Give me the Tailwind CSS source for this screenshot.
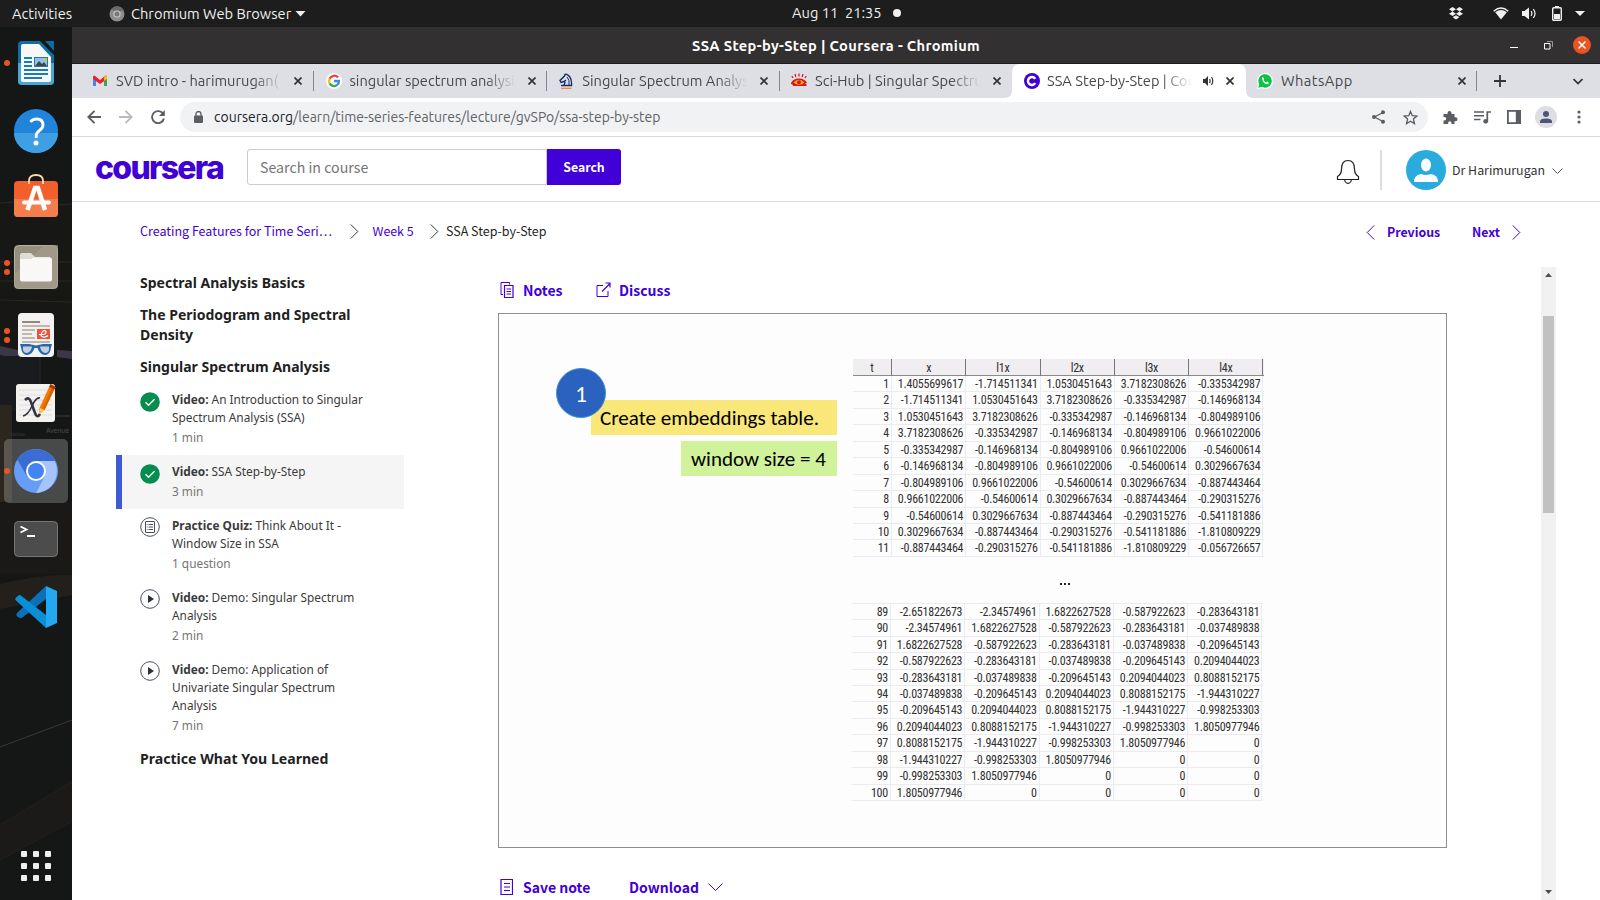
<!DOCTYPE html>
<html lang="en">
<head>
<meta charset="utf-8">
<title>SSA Step-by-Step | Coursera</title>
<script src="https://cdn.jsdelivr.net/npm/@tailwindcss/browser@4"></script>
</head>
<body class="w-[1600px] h-[900px] overflow-hidden bg-white font-['Ubuntu','Noto_Sans',sans-serif]">

<!-- GNOME top bar -->
<div class="h-[27px] bg-[#1d1d1d] text-[#f0f0f0] text-[14.67px] flex items-center relative whitespace-pre">
  <span class="ml-3 w-[97px]">Activities</span>
  <svg class="w-4 h-4" viewBox="0 0 16 16"><circle cx="8" cy="8" r="7.5" fill="#8d8d8d"/><path d="M1.5 4A7.5 7.5 0 0 1 15 5H8z" fill="#6a6a6a"/><circle cx="8" cy="8" r="3.6" fill="#c9c9c9"/><circle cx="8" cy="8" r="2.5" fill="#777"/></svg>
  <span class="ml-[6px]">Chromium Web Browser</span>
  <svg class="ml-[4px] w-[11px] h-[6px]" viewBox="0 0 11 6"><path d="M.5 0h10L5.500 5.500z" fill="#f0f0f0"/></svg>
  <div class="absolute left-[792px] top-0 h-[26px] flex items-center gap-[11px]"><span>Aug 11  21:35</span><span class="w-2 h-2 rounded-full bg-[#f0f0f0]"></span></div>
  <div class="ml-auto flex items-center mr-[15px]">
    <svg class="w-[14px] h-[13px] mr-[30px]" viewBox="0 0 14 13" fill="#f0f0f0"><path d="M3.500 0L7 2.200 3.500 4.400 0 2.200zM10.500 0L14 2.200 10.500 4.400 7 2.200zM3.500 4.600L7 6.800 3.500 9 0 6.800zM10.500 4.600L14 6.800 10.500 9 7 6.800zM7 8.200l3.400 2.100L7 12.500 3.600 10.300z"/></svg>
    <svg class="w-[16px] h-[13px] mr-[13px]" viewBox="0 0 16 13"><path d="M.7 4.200Q8-2.200 15.300 4.200" fill="none" stroke="#f0f0f0" stroke-width="1.400"/><path d="M2.200 5.200Q8 1 13.800 5.200L8 12.500z" fill="#f0f0f0"/></svg>
    <svg class="w-[15px] h-[13px] mr-[15px]" viewBox="0 0 15 13"><path d="M0 4h2.500L7 .5v12L2.500 9H0z" fill="#f0f0f0"/><path d="M9 4.200q1.800 2.300 0 4.600M11.300 2.200q3.500 4.300 0 8.600" fill="none" stroke="#f0f0f0" stroke-width="1.200"/></svg>
    <svg class="w-[10px] h-[15px] mr-[13px]" viewBox="0 0 10 15"><path d="M3 0h4v1.500H3z" fill="#f0f0f0"/><rect x=".7" y="1.700" width="8.600" height="12.600" rx="1" fill="none" stroke="#f0f0f0" stroke-width="1.400"/><path d="M2 8h6v5H2z" fill="#f0f0f0"/></svg>
    <svg class="w-[10px] h-[6px]" viewBox="0 0 10 6"><path d="M0 0h10L5 5z" fill="#f0f0f0"/></svg>
  </div>
</div>

<div class="flex h-[873px]">
  <!-- Dock -->
  <div class="w-[72px] h-full bg-[#151515] relative flex flex-col pt-[2px] shrink-0">
    <svg class="absolute inset-0 w-[72px] h-[873px]" viewBox="0 27 72 873">
      <rect y="27" width="72" height="873" fill="#151616"/>
      <rect y="200" width="72" height="160" fill="#171715"/>
      <path d="M0 203l14-1M58 205l14-1M0 262h72M0 281h72M0 300l72 2" stroke="#2a2822" stroke-width="1"/>
      <path d="M0 346l18 4v9l-18-4zM57 350l15 1v8l-15-2z" fill="#3b3648"/>
      <path d="M0 356h40v55H0z" fill="#1a1b1e"/><path d="M40 350v62" stroke="#2b2b28"/>
      <path d="M0 405h12v97H0z" fill="#2b271f"/><path d="M46 416h24" stroke="#3a3a38"/>
      <path d="M0 584Q40 574 72 575v20L0 609z" fill="#23201c"/>
      <path d="M0 502h72v72H0z" fill="#1a1917"/>
      <path d="M0 747L72 720" stroke="#3b3833"/>
      <path d="M0 825L72 780v40L0 860z" fill="#1b1a18"/><path d="M0 825L72 782M0 860L72 821" stroke="#24221f"/>
      <text x="46" y="433" font-size="6.800" font-family="Liberation Sans" fill="#4a4a4a">Avenue</text>
      <text x="10" y="436" font-size="5.500" font-family="Liberation Sans" fill="#3a3936">venue</text>
    </svg>
    <div class="relative h-[68px] flex items-center justify-center">
      <i class="absolute left-1 w-[6px] h-[6px] rounded-full bg-[#e95420]"></i>
      <svg class="w-9 h-11" viewBox="0 0 36 44"><path d="M4 0h18l14 14v26a4 4 0 0 1-4 4H4a4 4 0 0 1-4-4V4a4 4 0 0 1 4-4z" fill="#0f6fa3"/><path d="M0 22h36v18a4 4 0 0 1-4 4H4a4 4 0 0 1-4-4z" fill="#4aa6d3"/><path d="M27 0h9v10z" fill="#0e6ca0"/><path d="M5 3h16l12 13v23a2 2 0 0 1-2 2H5a2 2 0 0 1-2-2V5a2 2 0 0 1 2-2z" fill="#f7f7f7"/><path d="M6 17h8M6 21h8M6 25h8M6 29h24M6 33h24M6 37h18" stroke="#1b7bb5" stroke-width="2"/><path d="M16 16h14v10H16z" fill="#1b7bb5"/><path d="M17 17h12v8H17z" fill="#8fc4e6"/><path d="M17 25l4-5 3 3 2-2 3 4z" fill="#444"/><circle cx="27.500" cy="18.500" r="1.500" fill="#f0c020"/></svg>
    </div>
    <div class="relative h-[68px] flex items-center justify-center">
      <svg class="w-11 h-11" viewBox="0 0 44 44"><circle cx="22" cy="22" r="22" fill="#1f84da"/><path d="M0 24h44a22 20 0 0 1-44 0z" fill="#3f9fe5"/><path d="M16.500 13q2-3 6-3 6.500 0 6.500 6 0 3-3.500 5.500T22.200 27v2" fill="none" stroke="#fff" stroke-width="2.800"/><circle cx="22" cy="34" r="2.500" fill="#fff"/></svg>
    </div>
    <div class="relative h-[68px] flex items-center justify-center">
      <svg class="w-11 h-11 mb-2" viewBox="0 0 44 44"><rect y="8" width="44" height="36" rx="4" fill="#f1602c"/><path d="M0 26h44v14a4 4 0 0 1-4 4H4a4 4 0 0 1-4-4z" fill="#f47d4e"/><path d="M15 11V8q0-6 7-6t7 6v3" fill="none" stroke="#f9dcae" stroke-width="1.800"/><path d="M13.500 37L21 15h3l7 22" fill="none" stroke="#fff" stroke-width="4.500"/><path d="M10 29.500h25" stroke="#fff" stroke-width="4" stroke-linecap="round"/></svg>
    </div>
    <div class="relative h-[68px] flex items-center justify-center">
      <i class="absolute left-1 top-[27px] w-[6px] h-[6px] rounded-full bg-[#e95420]"></i><i class="absolute left-1 top-[36px] w-[6px] h-[6px] rounded-full bg-[#e95420]"></i>
      <svg class="w-11 h-11" viewBox="0 0 44 44"><rect x=".5" y=".5" width="43" height="43" rx="4" fill="#968e7e" stroke="#b7b0a4"/><path d="M0 30L30 0h14v40a4 4 0 0 1-4 4H4a4 4 0 0 1-4-4z" fill="#a8a08f" opacity=".6"/><path d="M6 10q0-2 2-2h9l4 4h15v10H6z" fill="#dfdcd3"/><rect x="6" y="12.500" width="32" height="24" rx="2" fill="#f9f8f7"/><path d="M6 14h11l3-2.500H6z" fill="#dfdcd3"/></svg>
    </div>
    <div class="relative h-[68px] flex items-center justify-center">
      <i class="absolute left-1 top-[27px] w-[6px] h-[6px] rounded-full bg-[#e95420]"></i><i class="absolute left-1 top-[36px] w-[6px] h-[6px] rounded-full bg-[#e95420]"></i>
      <svg class="w-9 h-11" viewBox="0 0 36 44"><rect width="36" height="44" rx="4" fill="#f3f2f0"/><path d="M4 9h18" stroke="#8e8a80" stroke-width="2"/><path d="M4 13h28M4 17h13M4 21h10M4 25h13M4 29h28" stroke="#bdb9ae" stroke-width="1.800"/><rect x="19" y="16" width="13" height="10" fill="#ee5340"/><path d="M21 21.500q7 .5 7-2t-3-1.500q-4 5 0 6 3 .5 5-1.500" fill="none" stroke="#fff" stroke-width="1.200"/><path d="M2 31h9l7 1.500 7-1.500h9l-1 3.500q-1 7.500-6 7.500t-7.500-7h-3q-2.500 7-7.500 7t-6-7.500z" fill="#2566ae"/><path d="M5 33.500h9q-1 6.500-5.500 6.500T5 33.500zM22 33.500h9q1 6.500-3.500 6.500T22 33.500z" fill="#c3cddb"/></svg>
    </div>
    <div class="relative h-[68px] flex items-center justify-center">
      <svg class="w-[42px] h-[42px]" viewBox="0 0 42 42"><rect x="1" y="2" width="39" height="38" rx="3" fill="#f4f2ef"/><path d="M4 8h33M4 13h33M4 18h33M4 23h33M4 28h33M4 33h33" stroke="#dcdce2"/><path d="M10 18q4-4 6 2l4 11q2 6 5 1" fill="none" stroke="#33323e" stroke-width="2.600"/><path d="M25 16q-4-1-8 8t-9 10" fill="none" stroke="#33323e" stroke-width="1.600"/><path d="M35.500 2l5 3-11 23-5 4v-6z" fill="#f57900"/><path d="M38 3.500l2.500 1.500-11 23-2-1z" fill="#d86400"/><path d="M25 26l4.500 2-5 4z" fill="#f4c94a"/><path d="M35.500 2l5 3-1.300 2.500-5-2.500z" fill="#a8370e"/></svg>
    </div>
    <div class="relative h-[68px] flex items-center justify-center">
      <div class="absolute left-1 top-[2px] w-16 h-16 rounded-[5px] bg-white/22"></div>
      <i class="absolute left-1 w-[6px] h-[6px] rounded-full bg-[#e95420]"></i>
      <svg class="relative w-11 h-11" viewBox="0 0 44 44"><circle cx="22" cy="22" r="22" fill="#669df6"/><path d="M22 22L2.900 11A22 22 0 0 1 41 11.500z" fill="#3b6cd4"/><path d="M3.800 10A22 22 0 0 1 40.500 12H22z" fill="#3b6cd4"/><path d="M22 12h18.500A22 22 0 0 1 22 44l9-17z" fill="#a5c4fb"/><path d="M3.300 10.500L13 27.500 22 22z" fill="#3b6cd4"/><circle cx="22" cy="22" r="10" fill="#fff"/><circle cx="22" cy="22" r="8" fill="#4384f4"/></svg>
    </div>
    <div class="relative h-[68px] flex items-center justify-center">
      <svg class="w-11 h-9" viewBox="0 0 44 36"><rect x=".5" y=".5" width="43" height="35" rx="4" fill="#4c4c4c" stroke="#777"/><path d="M6.500 5.500l6 3-6 3M13 15h8" fill="none" stroke="#fff" stroke-width="1.800"/></svg>
    </div>
    <div class="relative h-[68px] flex items-center justify-center">
      <svg class="w-[42px] h-[42px]" viewBox="0 0 42 42"><path d="M31 0L3.500 25.500Q-.5 29 3 31l2 1q1 .5 3-1L31 13z" fill="#0a71b8"/><path d="M31 42L1 14.500q-1.500-1.500 0-3l2.500-2q1.500-1 3 .5L31 29z" fill="#0b8ed8"/><path d="M31 0l11 5v32l-11 5z" fill="#24a8f2"/></svg>
    </div>
    <div class="absolute left-[21px] top-[824px] grid grid-cols-3 gap-[6px]">
      <i class="w-[6px] h-[6px] rounded-[1px] bg-[#eee]"></i><i class="w-[6px] h-[6px] rounded-[1px] bg-[#eee]"></i><i class="w-[6px] h-[6px] rounded-[1px] bg-[#eee]"></i>
      <i class="w-[6px] h-[6px] rounded-[1px] bg-[#eee]"></i><i class="w-[6px] h-[6px] rounded-[1px] bg-[#eee]"></i><i class="w-[6px] h-[6px] rounded-[1px] bg-[#eee]"></i>
      <i class="w-[6px] h-[6px] rounded-[1px] bg-[#eee]"></i><i class="w-[6px] h-[6px] rounded-[1px] bg-[#eee]"></i><i class="w-[6px] h-[6px] rounded-[1px] bg-[#eee]"></i>
    </div>
  </div>

  <!-- Browser window -->
  <div class="flex-1 min-w-0 h-full flex flex-col">
    <div class="h-[37px] bg-[#323031] border-b border-[#1c1a1b] flex items-center relative text-white shrink-0">
      <span class="ml-[620px] mt-[2px] font-bold text-[14.67px] tracking-[0.330px] whitespace-nowrap">SSA Step-by-Step | Coursera - Chromium</span>
      <div class="ml-auto mr-[9px] flex items-center">
        <svg class="w-[8px] h-[10px] mr-[26px]" viewBox="0 0 8 10"><path d="M0 7.500h8" stroke="#fff"/></svg>
        <svg class="w-[9px] h-[9px] mr-[20px]" viewBox="0 0 9 9"><path d="M.5 2.500h5.500v5.500H.5z" fill="none" stroke="#fff"/><path d="M3 .5h5.500V6" fill="none" stroke="#999"/></svg>
        <svg class="w-[18px] h-[18px]" viewBox="0 0 18 18"><circle cx="9" cy="9" r="9" fill="#e95420"/><path d="M5.500 5.500l7 7m0-7l-7 7" stroke="#fff" stroke-width="1.500"/></svg>
      </div>
    </div>

    <!-- Tab strip -->
    <div class="h-[34px] bg-[#dedfe5] flex pl-[8px] text-[14.67px] text-[#45474a] shrink-0 relative">
      <div class="w-[233.5px] flex items-center pl-3 relative">
        <svg class="w-4 h-4" viewBox="0 0 16 16"><path d="M1 4v9h3V7z" fill="#4285f4"/><path d="M12 7v6h3V4z" fill="#34a853"/><path d="M1 4q0-1.500 1.500-1.500L8 7l5.500-4.500Q15 2.500 15 4v2l-7 5-7-5z" fill="#ea2033"/><path d="M12 3.700q3-2.500 3 .3v2l-3 2z" fill="#fbbc04"/></svg>
        <span class="ml-2 w-[171px] overflow-hidden whitespace-nowrap [mask-image:linear-gradient(to_right,#000_80%,transparent_98%)]">SVD intro - harimurugan(</span>
        <svg class="ml-[7px] w-2 h-2" viewBox="0 0 8 8"><path d="M.5.500l7 7m0-7l-7 7" stroke="#333" stroke-width="1.700"/></svg>
        <i class="absolute right-0 top-[7px] w-px h-5 bg-[#85878d]"></i>
      </div>
      <div class="w-[233.300px] flex items-center pl-3 relative">
        <svg class="w-4 h-4" viewBox="0 0 16 16"><circle cx="8" cy="8" r="8" fill="#fff"/><g fill="none" stroke-width="2.300"><path d="M12 4.500A5 5 0 0 0 3.600 5.700" stroke="#ea4335"/><path d="M3.600 5.700a5 5 0 0 0 0 4.700" stroke="#fbbc05"/><path d="M3.600 10.400a5 5 0 0 0 7.600 1.500" stroke="#34a853"/><path d="M11.200 11.900Q13 10.400 12.900 8H8" stroke="#4285f4"/></g></svg>
        <span class="ml-2 w-[169px] overflow-hidden whitespace-nowrap [mask-image:linear-gradient(to_right,#000_80%,transparent_98%)]">singular spectrum analysi</span>
        <svg class="ml-[9px] w-2 h-2" viewBox="0 0 8 8"><path d="M.5.500l7 7m0-7l-7 7" stroke="#333" stroke-width="1.700"/></svg>
        <i class="absolute right-0 top-[7px] w-px h-5 bg-[#85878d]"></i>
      </div>
      <div class="w-[233.200px] flex items-center pl-[11.500px] relative">
        <svg class="w-4 h-4" viewBox="0 0 16 16"><path d="M3 12.500h10.500q.5-6-2-9T7 1.500L6.500 3 2 7.500l1 2 3-1 2-1.500M6 8.500q2 1-.5 4" fill="none" stroke="#1b2a6b" stroke-width="1.400"/><path d="M9 4q3 3 2 8" fill="none" stroke="#1b2a6b"/><path d="M3 15.300h10.500" stroke="#f5821f" stroke-width="1.200"/></svg>
        <span class="ml-2 w-[169px] overflow-hidden whitespace-nowrap [mask-image:linear-gradient(to_right,#000_80%,transparent_98%)]">Singular Spectrum Analys</span>
        <svg class="ml-[9px] w-2 h-2" viewBox="0 0 8 8"><path d="M.5.500l7 7m0-7l-7 7" stroke="#333" stroke-width="1.700"/></svg>
        <i class="absolute right-0 top-[7px] w-px h-5 bg-[#85878d]"></i>
      </div>
      <div class="w-[232px] flex items-center pl-3 relative">
        <svg class="-ml-px w-4 h-4" viewBox="0 0 16 16"><path d="M2 5L.8 3M4.800 4L4 1M8 3.500V.5M11.200 4L12 1M14 5l1.200-2" stroke="#d8141c" stroke-width="1.200"/><path d="M0 10q2-4.500 8-4.500t8 4.500l-2 .5 2 1.500-1 1H1.500q2-1-1.500-2z" fill="#d8141c"/><path d="M2.500 9.500Q5 6.800 8 6.800t5.500 2.700Q11 11.800 8 11.800t-5.500-2.300z" fill="#f7b500"/><circle cx="8" cy="9.200" r="2" fill="#d8141c"/></svg>
        <span class="ml-2 w-[169px] overflow-hidden whitespace-nowrap [mask-image:linear-gradient(to_right,#000_80%,transparent_98%)]">Sci-Hub | Singular Spectru</span>
        <svg class="ml-[9px] w-2 h-2" viewBox="0 0 8 8"><path d="M.5.500l7 7m0-7l-7 7" stroke="#333" stroke-width="1.700"/></svg>
      </div>
      <div class="w-[234px] flex items-center pl-3 relative bg-white rounded-t-[8px]">
        <svg class="absolute -left-2 bottom-0 w-2 h-2" viewBox="0 0 8 8"><path d="M8 0v8H0q8 0 8-8z" fill="#fff"/></svg>
        <svg class="absolute -right-2 bottom-0 w-2 h-2" viewBox="0 0 8 8"><path d="M0 0v8h8Q0 8 0 0z" fill="#fff"/></svg>
        <svg class="w-4 h-4" viewBox="0 0 16 16"><circle cx="8" cy="8" r="8" fill="#4000d6"/><path d="M11.300 5.800A4 4 0 1 0 11.300 10.200" fill="none" stroke="#fff" stroke-width="2.400"/></svg>
        <span class="-ml-px pl-2 w-[157px] overflow-hidden whitespace-nowrap [mask-image:linear-gradient(to_right,#000_78%,transparent_98%)]">SSA Step-by-Step | Cou</span>
        <svg class="ml-[7px] w-[11px] h-[10px]" viewBox="0 0 11 10"><path d="M0 3h2l3-3v10L2 7H0z" fill="#333"/><path d="M6.500 3q1.300 2 0 4M8.500 1q2.500 4 0 8" fill="none" stroke="#333" stroke-width="1.200"/></svg>
        <svg class="ml-[12px] w-2 h-2" viewBox="0 0 8 8"><path d="M.5.500l7 7m0-7l-7 7" stroke="#333" stroke-width="1.700"/></svg>
      </div>
      <div class="w-[231.500px] flex items-center pl-[11px] relative">
        <svg class="w-4 h-4" viewBox="0 0 16 16"><path d="M0 16l1-4.500A8 8 0 1 1 4.500 15z" fill="#fff"/><path d="M1.300 14.700l.9-3.500A6.700 6.700 0 1 1 4.800 13.800z" fill="#0cc143"/><path d="M5 5q1-1.600 1.700 0l.4 1-.6.900q.9 1.800 2.600 2.500l.9-1q1.500.4 1.800 1-.2 2-2.200 1.900Q5.500 10.500 5 5z" fill="#fff"/></svg>
        <span class="ml-2 w-[171px] tracking-[0.450px]">WhatsApp</span>
        <svg class="ml-[6px] w-2 h-2" viewBox="0 0 8 8"><path d="M.5.500l7 7m0-7l-7 7" stroke="#333" stroke-width="1.700"/></svg>
        <i class="absolute right-0 top-[7px] w-px h-5 bg-[#85878d]"></i>
      </div>
      <div class="flex-1 flex items-center justify-between pl-[17px] pr-[17px]">
        <svg class="w-3 h-3" viewBox="0 0 12 12"><path d="M6 0v12M0 6h12" stroke="#333" stroke-width="1.800"/></svg>
        <svg class="w-[10px] h-[7px]" viewBox="0 0 10 7"><path d="M.5 1L5 5.500 9.500 1" fill="none" stroke="#333" stroke-width="1.700"/></svg>
      </div>
    </div>

    <!-- Toolbar -->
    <div class="h-[39px] bg-white border-b border-[#d9d9dc] flex items-center shrink-0 pl-[15px] text-[#5f6368]">
      <svg class="w-[14px] h-[14px]" viewBox="0 0 14 14"><path d="M14 7H1.500M7.500.8L1.300 7l6.200 6.200" fill="none" stroke="#5a5d62" stroke-width="1.900"/></svg>
      <svg class="ml-[18px] w-[14px] h-[14px]" viewBox="0 0 14 14"><path d="M0 7h12.500M6.500.8L12.700 7l-6.200 6.200" fill="none" stroke="#b9bbbe" stroke-width="1.900"/></svg>
      <svg class="ml-[18px] w-[14px] h-[14px]" viewBox="0 0 14 14"><path d="M12.300 4.200A6 6 0 1 0 12.900 8.500" fill="none" stroke="#5a5d62" stroke-width="1.900"/><path d="M13.800 0v6H8z" fill="#5a5d62"/></svg>
      <div class="ml-[15px] w-[1248px] h-[30px] rounded-full bg-[#f1f2f4] flex items-center pl-[13.500px] text-[13.990px]">
        <svg class="w-[9px] h-[12px]" viewBox="0 0 9 12"><rect y="4.500" width="9" height="7.500" rx="1" fill="#5a5d62"/><path d="M2 5V3a2.500 2.500 0 0 1 5 0v2" fill="none" stroke="#5a5d62" stroke-width="1.300"/></svg>
        <span class="ml-[11.500px] w-[447px] whitespace-nowrap"><span class="text-[#202124]">coursera.org</span>/learn/time-series-features/lecture/gvSPo/ssa-step-by-step</span>
        <svg class="ml-auto mr-[18px] w-[13px] h-[14px]" viewBox="0 0 13 14"><path d="M11 2.500L2.500 7l8.500 4.500" fill="none" stroke="#5a5d62" stroke-width="1.300"/><g fill="#5a5d62"><circle cx="11" cy="2.300" r="2"/><circle cx="2" cy="7" r="2"/><circle cx="11" cy="11.700" r="2"/></g></svg>
        <svg class="mr-[10.500px] w-[15px] h-[15px]" viewBox="0 0 16 16"><path d="M8 1.500l1.900 4.600 4.900.4-3.700 3.200 1.100 4.800L8 12l-4.200 2.500 1.100-4.800L1.200 6.500l4.900-.4z" fill="none" stroke="#5a5d62" stroke-width="1.400"/></svg>
      </div>
      <svg class="ml-[15px] w-[15px] h-[15px]" viewBox="0 0 15 15"><path d="M1.500 4H4.500V3a2 2 0 0 1 4 0v1h3v3.200h1a2 2 0 0 1 0 4h-1V14H8.500v-1a1.700 1.700 0 0 0-3.400 0v1H.5v-3.500h1a1.700 1.700 0 0 0 0-3.400H.5V4z" fill="#5a5d62"/></svg>
      <svg class="ml-[15.500px] w-[17px] h-[13px]" viewBox="0 0 17 13"><path d="M0 1h10M0 4.700h10M0 8.400h6.500" stroke="#5a5d62" stroke-width="1.500"/><path d="M13.300 10V1H17" fill="none" stroke="#5a5d62" stroke-width="1.700"/><circle cx="11.700" cy="10.300" r="2.400" fill="#5a5d62"/></svg>
      <svg class="ml-[16.500px] w-[14px] h-[14px]" viewBox="0 0 14 14"><path d="M.9.900h12.200v12.200H.9z" fill="none" stroke="#5a5d62" stroke-width="1.800"/><path d="M8.800 1H13v12H8.800z" fill="#5a5d62"/></svg>
      <svg class="ml-[14px] w-[22px] h-[22px]" viewBox="0 0 22 22"><circle cx="11" cy="11" r="11" fill="#dcdee4"/><circle cx="11" cy="8" r="3" fill="#4c5677"/><path d="M5 17v-1.500q0-3 6-3t6 3V17z" fill="#4c5677"/></svg>
      <svg class="ml-[19.500px] w-[4px] h-[14px]" viewBox="0 0 4 14" fill="#5a5d62"><circle cx="2" cy="2" r="1.600"/><circle cx="2" cy="7" r="1.600"/><circle cx="2" cy="12" r="1.600"/></svg>
    </div>

    <!-- Course header -->
    <div class="h-[65px] border-b border-[#dcdcdc] flex items-center shrink-0 bg-white font-['Noto_Sans_CJK_SC','Open_Sans',sans-serif]">
      <span class="ml-[23px] w-[152px] font-['Inter',sans-serif] font-extrabold text-[32px] leading-none tracking-[-1.730px] text-[#4000d6] mb-[3px]">coursera</span>
      <div class="w-[300px] h-[36px] mb-[5px] rounded-l-[3px] border border-[#c9cad6] flex items-center pl-3 text-[14.2px] leading-5 text-[#757575]">Search in course</div>
      <div class="w-[74px] h-[36px] mb-[5px] rounded-r-[3px] bg-[#4000d6] text-white font-bold text-[12.300px] leading-5 flex items-center justify-center">Search</div>
      <svg class="ml-auto mt-[6px] w-[24px] h-[26px]" viewBox="0 0 24 26"><path d="M1.500 20.500v-3q4-2 4-7.500 0-8.500 6.500-8.500T18.500 10q0 5.500 4 7.500v3z" fill="none" stroke="#1f1f1f" stroke-width="1.200"/><path d="M8.700 20.500a3.300 3.800 0 0 0 6.600 0" fill="none" stroke="#1f1f1f" stroke-width="1.200"/></svg>
      <div class="ml-[20px] mt-px w-[2px] h-10 bg-[#dedede]"></div>
      <svg class="ml-[24px] mt-px w-10 h-10" viewBox="0 0 40 40"><circle cx="20" cy="20" r="20" fill="#2aabdd"/><ellipse cx="20" cy="15" rx="5" ry="6.500" fill="#fff"/><path d="M8 32q0-7 7-8 5 2 10 0 7 1 7 8z" fill="#fff"/></svg>
      <span class="ml-[6px] mt-[2px] w-[100px] text-[12.400px] leading-5 text-[#333] whitespace-nowrap">Dr Harimurugan</span>
      <svg class="mt-[3px] mr-[37px] w-[11px] h-[6px]" viewBox="0 0 11 6"><path d="M.5.500l5 5 5-5" fill="none" stroke="#555"/></svg>
    </div>

    <!-- Breadcrumbs -->
    <div class="h-[58px] shrink-0 flex items-center pl-[68px] font-['Noto_Sans_CJK_SC','Open_Sans',sans-serif] text-[12.500px] leading-5 text-[#4000d6] whitespace-nowrap">
      <span class="w-[209.500px]">Creating Features for Time Seri…</span>
      <svg class="w-[9px] h-[15px]" viewBox="0 0 9 15"><path d="M.8.500l7 7-7 7" fill="none" stroke="#333"/></svg>
      <span class="ml-[14px] w-[57.500px] text-[12.400px]">Week 5</span>
      <svg class="w-[9px] h-[15px]" viewBox="0 0 9 15"><path d="M.8.500l7 7-7 7" fill="none" stroke="#333"/></svg>
      <span class="ml-[7px] text-[#1f1f1f]">SSA Step-by-Step</span>
      <div class="ml-auto mt-[2px] mr-[79px] flex items-center font-bold text-[12.350px]">
        <svg class="w-[9px] h-[15px]" viewBox="0 0 9 15"><path d="M8.200.500l-7 7 7 7" fill="none" stroke="#4000d6"/></svg>
        <span class="ml-[12px] w-[85px]">Previous</span>
        <span class="w-[40px]">Next</span>
        <svg class="w-[9px] h-[15px]" viewBox="0 0 9 15"><path d="M.8.500l7 7-7 7" fill="none" stroke="#4000d6"/></svg>
      </div>
    </div>

    <div class="flex-1 min-h-0 flex pt-[7px]">
      <!-- Lesson list -->
      <div class="w-[332px] pl-[44px] shrink-0 pt-[6px] font-['Noto_Sans','Open_Sans',sans-serif] text-[11.850px] leading-[18px] text-[#3b3b3b]">
        <div class="pl-6 text-[14.030px] leading-5 font-bold text-[#1f1f1f] flex flex-col gap-3 pb-[6px] w-[250px]">
          <p>Spectral Analysis Basics</p>
          <p>The Periodogram and Spectral Density</p>
          <p>Singular Spectrum Analysis</p>
        </div>
        <div class="h-[72px] flex pl-6 pt-[7px]">
          <svg class="w-5 h-5 mr-3 mt-[2px]" viewBox="0 0 20 20"><circle cx="10" cy="10" r="9.800" fill="#078c4f"/><path d="M5.500 10.300l3 3 6-6" fill="none" stroke="#fff" stroke-width="1.300"/></svg>
          <div class="w-[210px]"><p><b>Video:</b> An Introduction to Singular Spectrum Analysis (SSA)</p><p class="pt-px leading-5 text-[#757575]">1 min</p></div>
        </div>
        <div class="h-[54px] flex pl-[18px] pt-[7px] border-l-6 border-[#3f5bd3] bg-[#f5f5f5]">
          <svg class="w-5 h-5 mr-3 mt-[2px]" viewBox="0 0 20 20"><circle cx="10" cy="10" r="9.800" fill="#078c4f"/><path d="M5.500 10.300l3 3 6-6" fill="none" stroke="#fff" stroke-width="1.300"/></svg>
          <div class="w-[210px]"><p><b>Video:</b> SSA Step-by-Step</p><p class="pt-px leading-5 text-[#757575]">3 min</p></div>
        </div>
        <div class="h-[72px] flex pl-6 pt-[7px]">
          <svg class="w-5 h-5 mr-3 mt-px" viewBox="0 0 20 20"><circle cx="10" cy="10" r="9.300" fill="none" stroke="#4a4d5c"/><rect x="5.500" y="4.500" width="9" height="11" rx=".5" fill="none" stroke="#4a4d5c"/><path d="M8.500 7.500h4.500M8.500 10h4.500M8.500 12.500h4.500M6.700 7.500h.8M6.700 10h.8M6.700 12.500h.8" stroke="#4a4d5c"/></svg>
          <div class="w-[200px]"><p><b>Practice Quiz:</b> Think About It - Window Size in SSA</p><p class="pt-px leading-5 text-[#757575]">1 question</p></div>
        </div>
        <div class="h-[72px] flex pl-6 pt-[7px]">
          <svg class="w-5 h-5 mr-3 mt-px" viewBox="0 0 20 20"><circle cx="10" cy="10" r="9.300" fill="none" stroke="#4a4d5c"/><path d="M8 6l6 4-6 4z" fill="#2d2f3c"/></svg>
          <div class="w-[200px]"><p><b>Video:</b> Demo: Singular Spectrum Analysis</p><p class="pt-px leading-5 text-[#757575]">2 min</p></div>
        </div>
        <div class="h-[90px] flex pl-6 pt-[7px]">
          <svg class="w-5 h-5 mr-3 mt-px" viewBox="0 0 20 20"><circle cx="10" cy="10" r="9.300" fill="none" stroke="#4a4d5c"/><path d="M8 6l6 4-6 4z" fill="#2d2f3c"/></svg>
          <div class="w-[180px]"><p><b>Video:</b> Demo: Application of Univariate Singular Spectrum Analysis</p><p class="pt-px leading-5 text-[#757575]">7 min</p></div>
        </div>
        <p class="pl-6 pt-[6px] text-[14.100px] leading-5 font-bold text-[#1f1f1f]">Practice What You Learned</p>
      </div>

      <!-- Lecture -->
      <div class="ml-[94px] w-[949px] flex flex-col font-['Noto_Sans_CJK_SC','Open_Sans',sans-serif] text-[14px] leading-5 font-bold text-[#4000d6]">
        <div class="h-[46px] shrink-0 flex items-center pl-[2px]">
          <svg class="w-[14px] h-[16px]" viewBox="0 0 14 16"><path d="M4.500 3.500h8.500v12H4.500z" fill="none" stroke="#4000d6" stroke-width="1.200"/><path d="M3 12.500H1V.5h8.500v2M6.500 7h4.500M6.500 9.500h4.500M6.500 12h4.500" fill="none" stroke="#4000d6"/></svg>
          <span class="ml-[9px] w-[73px]">Notes</span>
          <svg class="w-[15px] h-[16px]" viewBox="0 0 15 16"><path d="M7 3.500H1v11h11V9" fill="none" stroke="#4000d6"/><path d="M6 9.500L14 1.500M9.500 1H14v4.500" fill="none" stroke="#4000d6" stroke-width="1.200"/></svg>
          <span class="ml-[8px]">Discuss</span>
        </div>
        <div class="w-[949px] h-[535px] shrink-0 border border-[#8f8f8f] bg-[#fdfdfd] relative text-black font-normal">
          <div class="absolute left-[92px] top-[86px] w-[246px] h-[35px] bg-[#fae77a] pl-[9px] font-['Carlito','Lato',sans-serif] text-[21.050px] leading-[36px]">Create embeddings table.</div>
          <div class="absolute left-[182px] top-[127px] w-[156px] h-[35px] bg-[#cff29a] pl-[10px] font-['Carlito','Lato',sans-serif] text-[21.050px] leading-[36px]">window size = 4</div>
          <div class="absolute left-[57px] top-[54px] w-[50px] h-[50px] rounded-full bg-[#2b62c0] border border-[#3f92d8] text-white text-center font-['Carlito','Lato',sans-serif] text-[23px] leading-[50px]">1</div>
          <div class="absolute left-[354px] top-[45px] w-[411px] text-[12px] tracking-[-0.240px] leading-[16px] text-[#303030] font-['Roboto_Condensed','Liberation_Sans_Narrow','Roboto',sans-serif]">
            <div class="grid grid-cols-[39px_74.300px_74.300px_74.300px_74.300px_74.300px] h-[17px] bg-[#f0eef0] text-center border-b border-[#8a8a8a] leading-[18px]">
              <span class="border-r border-[#777]">t</span><span class="border-r border-[#777]">x</span><span class="border-r border-[#777]">l1x</span><span class="border-r border-[#777]">l2x</span><span class="border-r border-[#777]">l3x</span><span class="border-r border-[#777]">l4x</span>
            </div>
            <div id="head-rows" class="leading-[17px]"></div>
            <div class="h-[46px] flex items-center justify-center gap-[2px] pl-[12px] pt-[9px]">
              <i class="w-[2px] h-[2px] bg-[#222]"></i><i class="w-[2px] h-[2px] bg-[#222]"></i><i class="w-[2px] h-[2px] bg-[#222]"></i>
            </div>
            <div id="tail-rows" class="border-t border-[#ececf0] -ml-px mr-px"></div>
          </div>
        </div>
        <div class="h-[78px] shrink-0 flex items-center pl-[2px]">
          <svg class="w-[13px] h-[16px]" viewBox="0 0 13 16"><path d="M1 .5h11.500v15H1z" fill="none" stroke="#4000d6" stroke-width="1.200"/><path d="M4 4.500h6M4 8h6M4 11.500h6" stroke="#4000d6"/></svg>
          <span class="ml-[10px] w-[106px]">Save note</span>
          <span>Download</span>
          <svg class="ml-[9px] w-[15px] h-[8px]" viewBox="0 0 15 8"><path d="M.5.500l7 7 7-7" fill="none" stroke="#4000d6"/></svg>
        </div>
      </div>

      <!-- Scrollbar -->
      <div class="ml-auto mr-[44px] w-[15px] bg-[#f1f1f1] relative shrink-0">
        <svg class="absolute left-[4px] top-[6px] w-[7px] h-[4px]" viewBox="0 0 7 4"><path d="M3.500 0L7 4H0z" fill="#505050"/></svg>
        <div class="absolute left-[2px] top-[49px] w-[11px] h-[197px] bg-[#c1c1c1]"></div>
        <svg class="absolute left-[4px] bottom-[6px] w-[7px] h-[4px]" viewBox="0 0 7 4"><path d="M3.500 4L7 0H0z" fill="#505050"/></svg>
      </div>
    </div>
  </div>
</div>
<script>
const cell = 'border-r border-[#ececf0] pr-[2px] overflow-hidden';
function rows(id, first, series, n) {
  let html = '';
  for (let i = 0; i < n; i++) {
    html += '<div class="grid grid-cols-[39px_74.300px_74.300px_74.300px_74.300px_74.300px] h-[16.450px] text-right border-b border-[#ececf0]">'
      + `<span class="${cell}">${first + i}</span>`
      + series.slice(i, i + 5).map(v => `<span class="${cell}">${v}</span>`).join('') + '</div>';
  }
  document.getElementById(id).innerHTML = html;
}
rows('head-rows', 1, ['1.4055699617','-1.714511341','1.0530451643','3.7182308626','-0.335342987','-0.146968134','-0.804989106','0.9661022006','-0.54600614','0.3029667634','-0.887443464','-0.290315276','-0.541181886','-1.810809229','-0.056726657'], 11);
rows('tail-rows', 89, ['-2.651822673','-2.34574961','1.6822627528','-0.587922623','-0.283643181','-0.037489838','-0.209645143','0.2094044023','0.8088152175','-1.944310227','-0.998253303','1.8050977946','0','0','0','0'], 12);
</script>
</body>
</html>
